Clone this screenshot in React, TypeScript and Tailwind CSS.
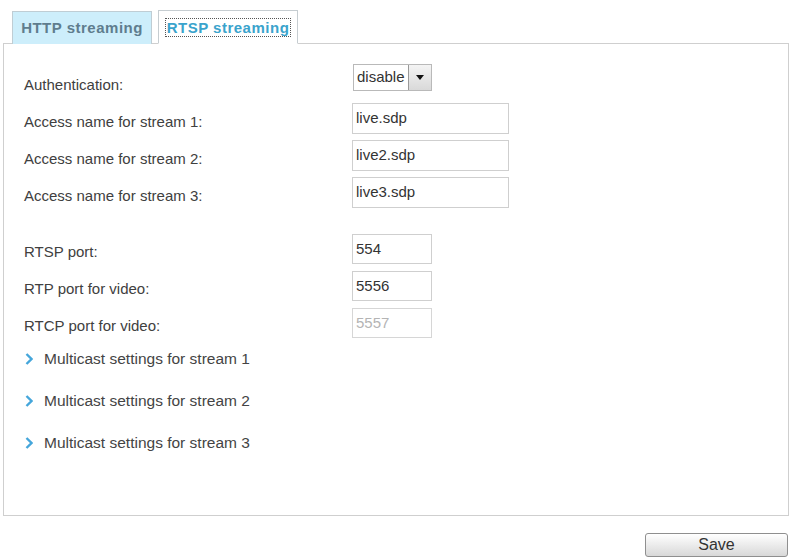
import { useState } from 'react';

type Field = { label: string; value: string; disabled?: boolean };

const ACCESS_NAMES: Field[] = [
  { label: 'Access name for stream 1:', value: 'live.sdp' },
  { label: 'Access name for stream 2:', value: 'live2.sdp' },
  { label: 'Access name for stream 3:', value: 'live3.sdp' },
];

const PORTS: Field[] = [
  { label: 'RTSP port:', value: '554' },
  { label: 'RTP port for video:', value: '5556' },
  { label: 'RTCP port for video:', value: '5557', disabled: true },
];

const MULTICAST = [1, 2, 3];

function Chevron() {
  return (
    <svg width="8" height="12" viewBox="0 0 8 12" className="shrink-0">
      <path d="M1.5 1 L6.5 6 L1.5 11" fill="none" stroke="#45a6db" strokeWidth="2.4" strokeLinejoin="miter" />
    </svg>
  );
}

export default function App() {
  const [tab, setTab] = useState<'http' | 'rtsp'>('rtsp');
  const [auth, setAuth] = useState('disable');

  return (
    <div className="w-[792px] h-[559px] bg-white pt-[10px] pl-[3px] font-['Liberation_Sans',Arial,sans-serif] text-[#404040]">
      {/* tabs */}
      <div className="relative z-10 flex items-end gap-[6px] pl-[9px] h-[34px]">
        <button
          onClick={() => setTab('http')}
          className={
            tab === 'http'
              ? 'w-[140px] h-[34px] bg-white border border-b-white border-[#c6cdd1] text-[15px] font-bold tracking-[0.5px] text-[#3aa3cc]'
              : 'w-[140px] h-[33px] bg-[#cdeefb] border border-b-0 border-[#bfcdd4] text-[15px] font-bold tracking-[0.5px] text-[#5f7d8e] pt-[1px]'
          }
        >
          HTTP streaming
        </button>
        <button
          onClick={() => setTab('rtsp')}
          className={
            tab === 'rtsp'
              ? 'w-[140px] h-[34px] bg-white border border-b-white border-[#c6cdd1] text-[15px] font-bold tracking-[0.5px] text-[#3aa3cc] pt-[2px]'
              : 'w-[140px] h-[33px] bg-[#cdeefb] border border-b-0 border-[#bfcdd4] text-[15px] font-bold tracking-[0.5px] text-[#5f7d8e]'
          }
        >
          <span className="outline-1 outline-dotted outline-[#555] px-[1px] leading-[18px]">RTSP streaming</span>
        </button>
      </div>

      {/* settings panel */}
      <div className="-mt-px w-[786px] h-[473px] border border-[#cfcfcf] pt-[20px] pl-[20px] text-[15px]">
        <div className="flex h-[39px]">
          <div className="w-[328px] mt-[12px] leading-[17px]">Authentication:</div>
          <div className="ml-px flex w-[79px] h-[27px] border border-[#b9b9b9] bg-white">
            <span className="flex-1 pl-[3px] leading-[24px] text-[#333]">{auth}</span>
            <button
              onClick={() => setAuth(auth === 'disable' ? 'basic' : 'disable')}
              className="w-[23px] h-full border-l border-[#999] bg-gradient-to-b from-[#f4f4f4] to-[#d9d9d9] flex items-center justify-center"
            >
              <svg width="8" height="5" viewBox="0 0 8 5">
                <path d="M0 0 H8 L4 5 Z" fill="#111" />
              </svg>
            </button>
          </div>
        </div>

        {ACCESS_NAMES.map((f) => (
          <div key={f.label} className="flex h-[37px]">
            <div className="w-[328px] mt-[10px] leading-[17px]">{f.label}</div>
            <input
              defaultValue={f.value}
              className="w-[157px] h-[31px] border border-[#cfcfcf] px-[3px] pb-[2px] text-[15px] text-[#333] outline-none"
            />
          </div>
        ))}

        <div className="mt-[20px] flex flex-col gap-[7px]">
          {PORTS.map((f) => (
            <div key={f.label} className="flex h-[30px]">
              <div className="w-[328px] mt-[9px] leading-[17px]">{f.label}</div>
              <input
                defaultValue={f.value}
                disabled={f.disabled}
                className={
                  f.disabled
                    ? 'w-[80px] h-[30px] border border-[#d6d6d6] bg-white px-[3px] pb-[2px] text-[15px] text-[#b4b4b4] outline-none'
                    : 'w-[80px] h-[30px] border border-[#cfcfcf] px-[3px] pb-[2px] text-[15px] text-[#333] outline-none'
                }
              />
            </div>
          ))}
        </div>

        {MULTICAST.map((n) => (
          <div key={n} className="flex items-center h-[42px] pl-[1px] gap-[11px] cursor-pointer">
            <Chevron />
            <span className="text-[15.5px] text-[#444]">Multicast settings for stream {n}</span>
          </div>
        ))}
      </div>

      <div className="w-[786px] flex justify-end pr-px mt-[17px]">
        <button className="w-[143px] h-[24px] rounded-[3px] border border-[#8f8f8f] bg-gradient-to-b from-white to-[#d8d8d8] text-[16px] text-[#333] leading-[20px]">
          Save
        </button>
      </div>
    </div>
  );
}
